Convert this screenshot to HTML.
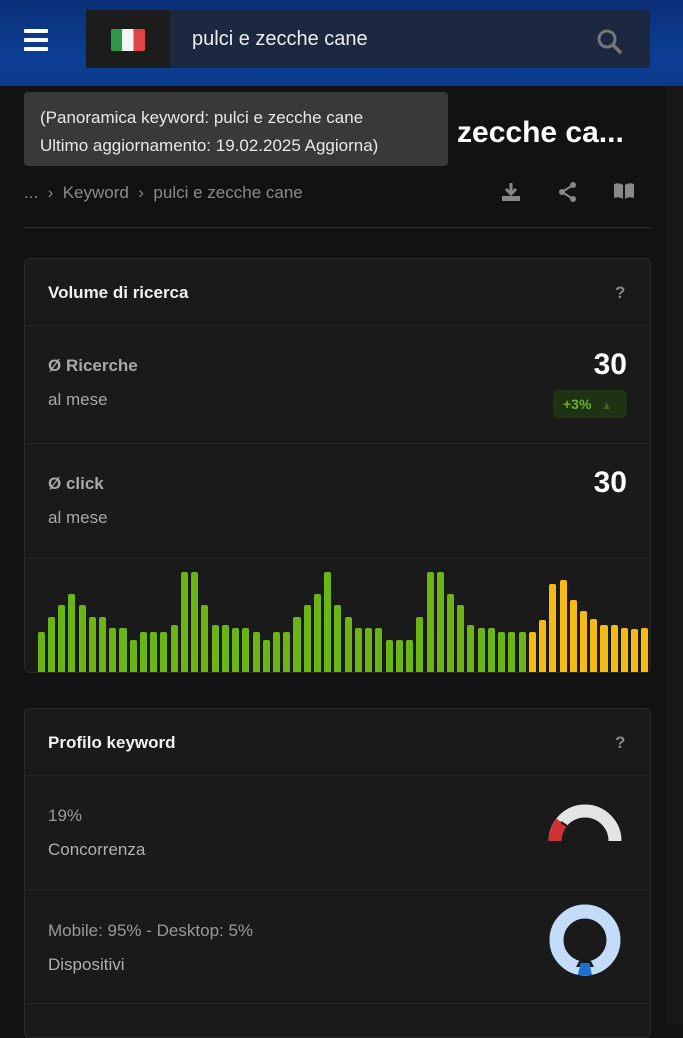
<!DOCTYPE html>
<html><head><meta charset="utf-8"><style>
*{margin:0;padding:0;box-sizing:border-box}
body{width:683px;height:1024px;overflow:hidden;background:#121212;font-family:"Liberation Sans",sans-serif;position:relative;color:#ddd}
.a{position:absolute}
.hdr{left:0;top:0;width:683px;height:86px;background:linear-gradient(180deg,#0b2f78 0%,#0c3f95 70%,#0b3a8a 100%)}
.card{left:24px;width:627px;background:#1a1a1a;border:1px solid #2a2a2a;border-radius:6px}
.sep{left:25px;width:625px;height:1px;background:#262626}
.lbl{font-size:17px;color:#a8a8a8}
.bars{left:36px;top:558px;width:614px;height:114px;display:flex;align-items:flex-end}
.bars i{flex:1;margin:0 1.6px;background:#6bb514;border-radius:2px 2px 0 0}
.bars i.y{background:#f5bb14}
</style></head><body>
<div class="a hdr"></div>
<div class="a" style="left:24px;top:29px;width:24px;height:4px;background:#fff;border-radius:1px"></div>
<div class="a" style="left:24px;top:38px;width:24px;height:4px;background:#fff;border-radius:1px"></div>
<div class="a" style="left:24px;top:47px;width:24px;height:4px;background:#fff;border-radius:1px"></div>
<div class="a" style="left:86px;top:10px;width:564px;height:58px;background:#1c2840;border-radius:2px"></div>
<div class="a" style="left:86px;top:10px;width:84px;height:58px;background:#1c1c1c"></div>
<div class="a" style="left:111px;top:29px;width:34px;height:22px;border-radius:2px;background:linear-gradient(90deg,#2e9a48 0 33%,#f4f4f4 33% 66%,#e04444 66%)"></div>
<div class="a" style="left:192px;top:28px;font-size:20px;color:#eee">pulci e zecche cane</div>
<svg class="a" style="left:596px;top:28px" width="28" height="28" viewBox="0 0 28 28"><circle cx="11" cy="11" r="8" fill="none" stroke="#777" stroke-width="3"/><path d="M17 17l7 7" stroke="#777" stroke-width="3.5" stroke-linecap="round"/></svg>

<div class="a" style="left:432px;top:116px;font-size:30px;color:#fff;font-weight:bold;white-space:nowrap">e zecche ca...</div>
<div class="a" style="left:24px;top:92px;width:424px;height:74px;background:#393939;border-radius:4px"></div>
<div class="a" style="left:40px;top:104px;font-size:17px;color:#e8e8e8;line-height:28px;white-space:nowrap">(Panoramica keyword: pulci e zecche cane<br>Ultimo aggiornamento: 19.02.2025 Aggiorna)</div>

<div class="a" style="left:24px;top:183px;font-size:17px;color:#8a8a8a;white-space:nowrap">...&nbsp;&nbsp;›&nbsp;&nbsp;Keyword&nbsp;&nbsp;›&nbsp;&nbsp;pulci e zecche cane</div>
<svg class="a" style="left:500px;top:181px" width="22" height="22" viewBox="0 0 22 22"><path d="M11 2v11M6 8l5 5 5-5" stroke="#888" stroke-width="3" fill="none"/><rect x="2" y="15" width="18" height="5" fill="#888"/></svg>
<svg class="a" style="left:557px;top:181px" width="22" height="22" viewBox="0 0 22 22"><circle cx="16" cy="4" r="3" fill="#888"/><circle cx="5" cy="11" r="3" fill="#888"/><circle cx="16" cy="18" r="3" fill="#888"/><path d="M16 4L5 11l11 7" stroke="#888" stroke-width="2" fill="none"/></svg>
<svg class="a" style="left:613px;top:182px" width="22" height="18" viewBox="0 0 22 18"><path d="M1 2q5-2 9 1v14q-4-3-9-1zM21 2q-5-2-9 1v14q4-3 9-1z" fill="#888"/></svg>
<div class="a" style="left:24px;top:227px;width:627px;height:1px;background:#333"></div>

<div class="a card" style="top:258px;height:415px"></div>
<div class="a" style="left:48px;top:283px;font-size:17px;font-weight:bold;color:#f0f0f0">Volume di ricerca</div>
<div class="a" style="left:615px;top:283px;font-size:17px;font-weight:bold;color:#888">?</div>
<div class="a sep" style="top:325px"></div>
<div class="a lbl" style="left:48px;top:356px;font-weight:bold">Ø Ricerche</div>
<div class="a lbl" style="left:48px;top:390px">al mese</div>
<div class="a" style="left:560px;top:348px;width:67px;text-align:right;font-size:30px;font-weight:bold;color:#fff">30</div>
<div class="a" style="left:553px;top:390px;width:74px;height:28px;background:#1e3214;border-radius:5px;font-size:14px;font-weight:bold;color:#6db020;padding:6px 0 0 10px">+3% <span style="font-size:11px;margin-left:6px;color:#3f6a18">▲</span></div>
<div class="a sep" style="top:443px"></div>
<div class="a lbl" style="left:48px;top:474px;font-weight:bold">Ø click</div>
<div class="a lbl" style="left:48px;top:508px">al mese</div>
<div class="a" style="left:560px;top:466px;width:67px;text-align:right;font-size:30px;font-weight:bold;color:#fff">30</div>
<div class="a sep" style="top:558px"></div>
<div class="a bars">
<i style="height:40px"></i><i style="height:55px"></i><i style="height:67px"></i><i style="height:78px"></i><i style="height:67px"></i><i style="height:55px"></i><i style="height:55px"></i><i style="height:44px"></i><i style="height:44px"></i><i style="height:32px"></i>
<i style="height:40px"></i><i style="height:40px"></i><i style="height:40px"></i><i style="height:47px"></i><i style="height:100px"></i><i style="height:100px"></i><i style="height:67px"></i><i style="height:47px"></i><i style="height:47px"></i><i style="height:44px"></i>
<i style="height:44px"></i><i style="height:40px"></i><i style="height:32px"></i><i style="height:40px"></i><i style="height:40px"></i><i style="height:55px"></i><i style="height:67px"></i><i style="height:78px"></i><i style="height:100px"></i><i style="height:67px"></i>
<i style="height:55px"></i><i style="height:44px"></i><i style="height:44px"></i><i style="height:44px"></i><i style="height:32px"></i><i style="height:32px"></i><i style="height:32px"></i><i style="height:55px"></i><i style="height:100px"></i><i style="height:100px"></i>
<i style="height:78px"></i><i style="height:67px"></i><i style="height:47px"></i><i style="height:44px"></i><i style="height:44px"></i><i style="height:40px"></i><i style="height:40px"></i><i style="height:40px"></i><i class="y" style="height:40px"></i><i class="y" style="height:52px"></i>
<i class="y" style="height:88px"></i><i class="y" style="height:92px"></i><i class="y" style="height:72px"></i><i class="y" style="height:61px"></i><i class="y" style="height:53px"></i><i class="y" style="height:47px"></i><i class="y" style="height:47px"></i><i class="y" style="height:44px"></i><i class="y" style="height:43px"></i><i class="y" style="height:44px"></i>
</div>

<div class="a card" style="top:708px;height:330px"></div>
<div class="a" style="left:48px;top:733px;font-size:17px;font-weight:bold;color:#f0f0f0">Profilo keyword</div>
<div class="a" style="left:615px;top:733px;font-size:17px;font-weight:bold;color:#888">?</div>
<div class="a sep" style="top:775px"></div>
<div class="a lbl" style="left:48px;top:806px;color:#999">19%</div>
<div class="a lbl" style="left:48px;top:840px;color:#b0b0b0">Concorrenza</div>
<svg class="a" style="left:545px;top:800px" width="80" height="45" viewBox="0 0 80 45"><path d="M10 41A30 30 0 0 1 70 41" fill="none" stroke="#e4e4e4" stroke-width="13"/><path d="M10 41A30 30 0 0 1 16.5 22.5" fill="none" stroke="#cf3232" stroke-width="13"/><path d="M16 22L22 26" stroke="#1a1a1a" stroke-width="2"/></svg>
<div class="a sep" style="top:889px"></div>
<div class="a lbl" style="left:48px;top:921px;color:#999">Mobile: 95% - Desktop: 5%</div>
<div class="a lbl" style="left:48px;top:955px;color:#b0b0b0">Dispositivi</div>
<svg class="a" style="left:545px;top:900px" width="80" height="80" viewBox="0 0 80 80"><circle cx="40" cy="40" r="28.5" fill="none" stroke="#c2dcfa" stroke-width="14"/><path d="M31 67L34 61L46 61L49 67Z" fill="#1a1a1a"/><path d="M33 75L35.5 63L44.5 63L47 75Z" fill="#1f6fd0"/></svg>
<div class="a sep" style="top:1003px"></div>
<div class="a" style="left:666px;top:86px;width:17px;height:938px;background:#181818"></div>
</body></html>
